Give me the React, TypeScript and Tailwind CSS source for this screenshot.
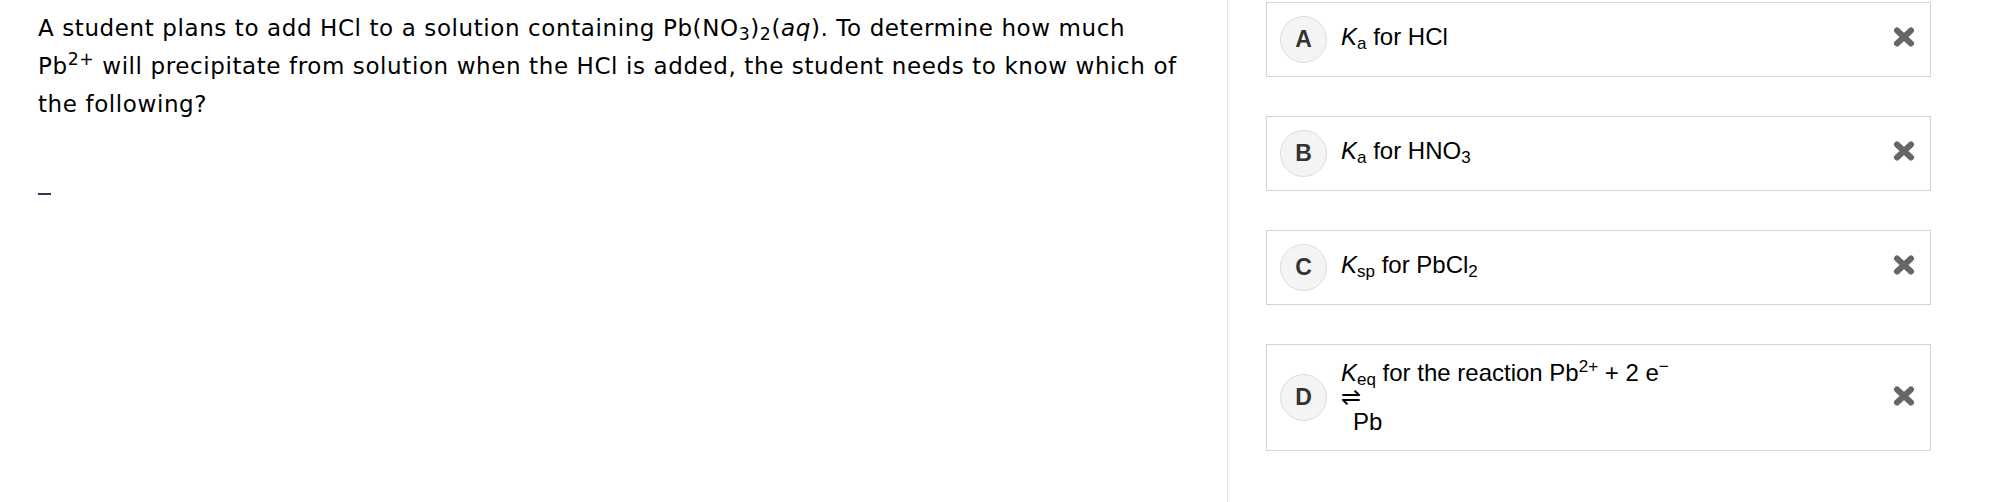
const options = [
  { letter: "A", body: <><i>K</i><sub className="text-[17px]">a</sub> for HCl</> },
  { letter: "B", body: <><i>K</i><sub className="text-[17px]">a</sub> for HNO<sub className="text-[17px]">3</sub></> },
  { letter: "C", body: <><i>K</i><sub className="text-[17px]">sp</sub> for PbCl<sub className="text-[17px]">2</sub></> },
];

const CloseIcon = () => (
  <svg width="22" height="22" viewBox="0 0 22 22" className="shrink-0">
    <path d="M4 4.5 L18 17.5 M18 4.5 L4 17.5" stroke="#666" strokeWidth="6" strokeLinecap="round" />
  </svg>
);

const Badge = ({ letter }: { letter: string }) => (
  <div className="flex h-[47px] w-[47px] shrink-0 items-center justify-center rounded-full border border-[#dcdcdc] bg-[#f4f4f4]">
    <span className="text-[23px] leading-none font-bold text-[#333]">{letter}</span>
  </div>
);

const Option = ({ letter, children, tall }: { letter: string; children: React.ReactNode; tall?: boolean }) => (
  <div
    className={`flex items-center border border-[#d4d4d4] bg-white pl-[13px] pr-[15px] ${tall ? "h-[107px]" : "h-[75px]"}`}>
    <Badge letter={letter} />
    <div className={`ml-[14px] flex-1 text-[24px] leading-[24.5px] text-black ${tall ? "" : "mb-[5px]"}`}>
      {children}
    </div>
    <div className={tall ? "mb-[3px]" : "mb-[5px]"}>
      <CloseIcon />
    </div>
  </div>
);

export default function App() {
  return (
    <div className="flex h-[502px] w-[2004px] bg-white" style={{ fontFamily: '"Liberation Sans", Arial, sans-serif' }}>
      <div className="w-[1228px] shrink-0 border-r border-[#e2e2e2] pl-[38px] pt-[9px]">
        <p
          className="text-[23px] leading-[38px] tracking-[0.6px] text-black"
          style={{ fontFamily: '"DejaVu Sans", Verdana, sans-serif' }}>
          A student plans to add HCl to a solution containing Pb(NO<sub>3</sub>)<sub>2</sub>(<i>aq</i>). To
          determine how much
          <br />
          Pb<sup>2+</sup> will precipitate from solution when the HCl is added, the student needs to know which of
          <br />
          the following?
        </p>
        <div className="mt-[70px] h-[2px] w-[13px] bg-[#2c3a55]" />
      </div>

      <div className="flex w-[665px] flex-col gap-[39px] pl-[38px] pt-[2px] box-content">
        {options.map((o) => (
          <Option key={o.letter} letter={o.letter}>
            {o.body}
          </Option>
        ))}
        <Option letter="D" tall>
          <div>
            <i>K</i>
            <sub className="text-[17px]">eq</sub> for the reaction Pb<sup className="text-[17px]">2+</sup> + 2 e
            <sup className="text-[17px]">−</sup>
          </div>
          <div style={{ fontFamily: '"DejaVu Sans", sans-serif' }}>⇌</div>
          <div className="pl-[12px]">Pb</div>
        </Option>
      </div>
    </div>
  );
}
